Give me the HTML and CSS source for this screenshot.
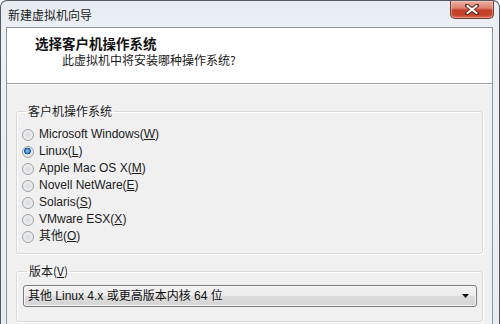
FILE: index.html
```html
<!DOCTYPE html>
<html lang="zh-CN">
<head>
<meta charset="utf-8">
<title>新建虚拟机向导</title>
<link rel="stylesheet" href="styles.css">
</head>
<body>
<div class="window">
  <div class="titlebar">
    <span class="title">新建虚拟机向导</span>
    <div class="close">
      <svg width="14" height="11" viewBox="0 0 14 11">
        <path d="M2 1.5 L12 9.5 M12 1.5 L2 9.5" stroke="#5a2a22" stroke-width="4" stroke-linecap="round"/>
        <path d="M2.5 2 L11.5 9 M11.5 2 L2.5 9" stroke="#ffffff" stroke-width="2.2" stroke-linecap="round"/>
      </svg>
    </div>
  </div>
  <div class="client">
    <div class="header">
      <div class="h-title">选择客户机操作系统</div>
      <div class="h-sub">此虚拟机中将安装哪种操作系统?</div>
    </div>
    <div class="body">
      <fieldset class="group os">
        <legend>客户机操作系统</legend>
        <div class="radio"><span class="dot"></span>Microsoft Windows(<u>W</u>)</div>
        <div class="radio"><span class="dot on"></span>Linux(<u>L</u>)</div>
        <div class="radio"><span class="dot"></span>Apple Mac OS X(<u>M</u>)</div>
        <div class="radio"><span class="dot"></span>Novell NetWare(<u>E</u>)</div>
        <div class="radio"><span class="dot"></span>Solaris(<u>S</u>)</div>
        <div class="radio"><span class="dot"></span>VMware ESX(<u>X</u>)</div>
        <div class="radio"><span class="dot"></span>其他(<u>O</u>)</div>
      </fieldset>
      <fieldset class="group ver">
        <legend>版本(<u>V</u>)</legend>
        <div class="select">
          <span class="sel-text">其他 Linux 4.x 或更高版本内核 64 位</span>
          <svg class="arrow" width="7" height="4" viewBox="0 0 7 4"><path d="M0 0 H7 L3.5 4 Z" fill="#111"/></svg>
        </div>
      </fieldset>
    </div>
  </div>
</div>
</body>
</html>
```
FILE: styles.css
```css
html, body {
  margin: 0;
  padding: 0;
  background: #ffffff;
  overflow: hidden;
  width: 500px;
  height: 324px;
}

.window {
  box-sizing: border-box;
  width: 500px;
  height: 324px;
  border: 1px solid #55595e;
  border-bottom: none;
  border-radius: 7px 7px 0 0;
  background: linear-gradient(to bottom, #e7ecf2 0, #edf1f6 40px, #e9edf2 100%);
  display: flex;
  flex-direction: column;
  overflow: hidden;
  font-family: "Liberation Sans", "Noto Sans CJK SC", sans-serif;
  color: #111;
}

.titlebar {
  height: 26px;
  display: flex;
  align-items: flex-start;
  flex-shrink: 0;
}

.title {
  font-family: "Noto Sans CJK SC", sans-serif;
  font-size: 12px;
  line-height: 14px;
  padding: 7px 0 0 7px;
  color: #1a1a1a;
}

.close {
  margin-left: auto;
  margin-right: 5px;
  width: 44px;
  height: 18px;
  box-sizing: border-box;
  border: 1px solid #6e3a32;
  border-top: none;
  border-radius: 0 0 5px 5px;
  background: linear-gradient(to bottom, #eab0a2 0%, #dd8570 40%, #c63e27 55%, #c5432b 80%, #d66448 100%);
  box-shadow: inset 0 0 0 1px rgba(255, 220, 210, 0.45);
  display: flex;
  align-items: center;
  justify-content: center;
}

.client {
  flex: 1;
  min-height: 0;
  margin: 0 6px 0 5px;
  border: 1px solid #8c949c;
  border-bottom: none;
  background: #f0f0f0;
  display: flex;
  flex-direction: column;
}

.header {
  flex-shrink: 0;
  background: #ffffff;
  border-bottom: 1px solid #a0a0a0;
  padding-top: 7px;
  box-sizing: content-box;
  height: 48px;
}

.h-title {
  font-family: "Noto Sans CJK SC", sans-serif;
  font-size: 13.5px;
  font-weight: bold;
  line-height: 17px;
  padding-left: 28px;
}

.h-sub {
  font-family: "Noto Sans CJK SC", sans-serif;
  font-size: 12px;
  line-height: 16px;
  padding-left: 55px;
  color: #1a1a1a;
}

.body {
  padding: 0 9px 0 9px;
  box-shadow: inset 0 1px 0 #ffffff;
}

.group {
  margin: 0;
  padding: 0;
  border: 1px solid #d9d9d9;
  border-radius: 3px;
  box-shadow: inset 1px 1px 0 #ffffff, 1px 1px 0 #ffffff;
  min-inline-size: 0;
}

.group legend {
  margin-left: 4px;
  padding: 0 2px;
  font-family: "Noto Sans CJK SC", sans-serif;
  font-size: 12px;
  line-height: 16px;
  color: #1a1a1a;
}

.os {
  margin-top: 19px;
  padding: 7px 0 8px 5px;
}

.radio {
  display: flex;
  align-items: center;
  height: 17px;
  font-size: 12px;
  line-height: 17px;
  color: #1a1a1a;
}

.dot {
  width: 12px;
  height: 12px;
  box-sizing: border-box;
  border-radius: 50%;
  border: 1px solid #9a9ea2;
  background: radial-gradient(circle at 50% 50%, #d6d9dc 0, #e6e8ea 45%, #f6f7f8 100%);
  margin-right: 5px;
  flex-shrink: 0;
}

.dot.on {
  background:
    radial-gradient(circle at 45% 40%, #9fd4f7 0, #3a8ad6 2px, #1a4f93 3.2px, rgba(0,0,0,0) 3.6px),
    radial-gradient(circle at 50% 50%, #d6d9dc 0, #e6e8ea 45%, #f6f7f8 100%);
}

.ver {
  margin-top: 9px;
  padding: 6px 5px 14px 6px;
}

.select {
  height: 22px;
  box-sizing: border-box;
  border: 1px solid #7a7a7a;
  border-radius: 3px;
  background: linear-gradient(to bottom, #f3f3f3 0%, #ebebeb 50%, #dddddd 51%, #d4d4d4 100%);
  box-shadow: inset 0 0 0 1px #f8f8f8;
  display: flex;
  align-items: center;
  padding: 0 7px 0 4px;
}

.sel-text {
  font-size: 12px;
  line-height: 18px;
  color: #111;
}

.arrow {
  margin-left: auto;
}

u {
  text-decoration: underline;
  text-underline-offset: 1px;
}
```
